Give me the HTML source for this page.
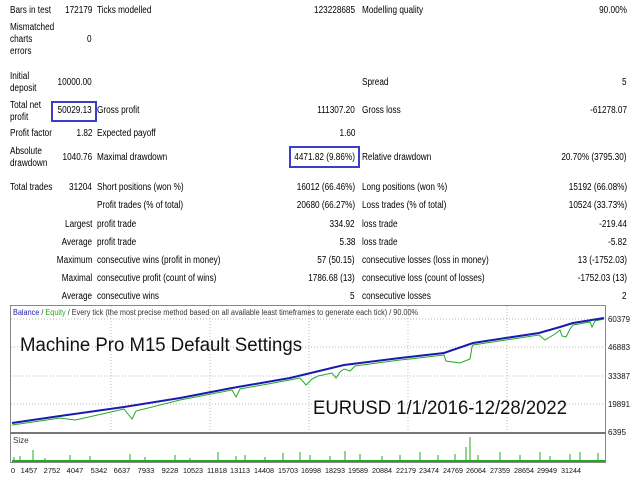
<!DOCTYPE html>
<html><head><meta charset="utf-8"><style>
*{margin:0;padding:0}
body{width:640px;height:480px;background:#fff;position:relative;overflow:hidden;font-family:"Liberation Sans",sans-serif;font-size:10px;color:#000}
.t{position:absolute;white-space:nowrap;line-height:12px;transform:scaleX(.82);transform-origin:left top}
.r{text-align:right;transform-origin:right top}
.box{position:absolute;border:2px solid #3b3fc8}
</style></head><body>
<div class="t" style="left:10px;top:5px">Bars in test</div>
<div class="t r" style="right:548px;top:5px">172179</div>
<div class="t" style="left:97px;top:5px">Ticks modelled</div>
<div class="t r" style="right:285px;top:5px">123228685</div>
<div class="t" style="left:362px;top:5px">Modelling quality</div>
<div class="t r" style="right:13px;top:5px">90.00%</div>

<div class="t" style="left:10px;top:22px">Mismatched<br>charts<br>errors</div>
<div class="t r" style="right:548px;top:34px">0</div>

<div class="t" style="left:10px;top:71px">Initial<br>deposit</div>
<div class="t r" style="right:548px;top:77px">10000.00</div>
<div class="t" style="left:362px;top:77px">Spread</div>
<div class="t r" style="right:13px;top:77px">5</div>

<div class="t" style="left:10px;top:100px">Total net<br>profit</div>
<div class="box" style="left:51px;top:101px;width:42px;height:17px"></div>
<div class="t r" style="right:548px;top:105px">50029.13</div>
<div class="t" style="left:97px;top:105px">Gross profit</div>
<div class="t r" style="right:285px;top:105px">111307.20</div>
<div class="t" style="left:362px;top:105px">Gross loss</div>
<div class="t r" style="right:13px;top:105px">-61278.07</div>

<div class="t" style="left:10px;top:128px">Profit factor</div>
<div class="t r" style="right:548px;top:128px">1.82</div>
<div class="t" style="left:97px;top:128px">Expected payoff</div>
<div class="t r" style="right:285px;top:128px">1.60</div>

<div class="t" style="left:10px;top:146px">Absolute<br>drawdown</div>
<div class="t r" style="right:548px;top:152px">1040.76</div>
<div class="t" style="left:97px;top:152px">Maximal drawdown</div>
<div class="box" style="left:289px;top:146px;width:67px;height:18px"></div>
<div class="t r" style="right:285px;top:152px">4471.82 (9.86%)</div>
<div class="t" style="left:362px;top:152px">Relative drawdown</div>
<div class="t r" style="right:13px;top:152px">20.70% (3795.30)</div>

<div class="t" style="left:10px;top:182px">Total trades</div>
<div class="t r" style="right:548px;top:182px">31204</div>
<div class="t" style="left:97px;top:182px">Short positions (won %)</div>
<div class="t r" style="right:285px;top:182px">16012 (66.46%)</div>
<div class="t" style="left:362px;top:182px">Long positions (won %)</div>
<div class="t r" style="right:13px;top:182px">15192 (66.08%)</div>

<div class="t" style="left:97px;top:200px">Profit trades (% of total)</div>
<div class="t r" style="right:285px;top:200px">20680 (66.27%)</div>
<div class="t" style="left:362px;top:200px">Loss trades (% of total)</div>
<div class="t r" style="right:13px;top:200px">10524 (33.73%)</div>

<div class="t r" style="right:548px;top:219px">Largest</div>
<div class="t" style="left:97px;top:219px">profit trade</div>
<div class="t r" style="right:285px;top:219px">334.92</div>
<div class="t" style="left:362px;top:219px">loss trade</div>
<div class="t r" style="right:13px;top:219px">-219.44</div>

<div class="t r" style="right:548px;top:237px">Average</div>
<div class="t" style="left:97px;top:237px">profit trade</div>
<div class="t r" style="right:285px;top:237px">5.38</div>
<div class="t" style="left:362px;top:237px">loss trade</div>
<div class="t r" style="right:13px;top:237px">-5.82</div>

<div class="t r" style="right:548px;top:255px">Maximum</div>
<div class="t" style="left:97px;top:255px">consecutive wins (profit in money)</div>
<div class="t r" style="right:285px;top:255px">57 (50.15)</div>
<div class="t" style="left:362px;top:255px">consecutive losses (loss in money)</div>
<div class="t r" style="right:13px;top:255px">13 (-1752.03)</div>

<div class="t r" style="right:548px;top:273px">Maximal</div>
<div class="t" style="left:97px;top:273px">consecutive profit (count of wins)</div>
<div class="t r" style="right:285px;top:273px">1786.68 (13)</div>
<div class="t" style="left:362px;top:273px">consecutive loss (count of losses)</div>
<div class="t r" style="right:13px;top:273px">-1752.03 (13)</div>

<div class="t r" style="right:548px;top:291px">Average</div>
<div class="t" style="left:97px;top:291px">consecutive wins</div>
<div class="t r" style="right:285px;top:291px">5</div>
<div class="t" style="left:362px;top:291px">consecutive losses</div>
<div class="t r" style="right:13px;top:291px">2</div>

<svg style="position:absolute;left:0;top:0" width="640" height="480">
<rect x="10.5" y="305.5" width="595" height="157" fill="#fff" stroke="#888"/>
<g stroke="#bbb" stroke-dasharray="1,2">
<line x1="11" x2="605" y1="319" y2="319"/><line x1="11" x2="605" y1="347" y2="347"/><line x1="11" x2="605" y1="376" y2="376"/><line x1="11" x2="605" y1="404" y2="404"/>
<line x1="111" x2="111" y1="306" y2="432"/><line x1="210" x2="210" y1="306" y2="432"/><line x1="309" x2="309" y1="306" y2="432"/><line x1="408" x2="408" y1="306" y2="432"/><line x1="507" x2="507" y1="306" y2="432"/>
</g>
<line x1="10" x2="606" y1="433" y2="433" stroke="#777" stroke-width="2"/>
<polyline fill="none" stroke="#22aa22" stroke-width="1" points="12,425 40,421 60,418 75,420 80,419 124,409 128,414 132,419 136,411 180,400 232,390 236,397 240,389 290,380 300,378 306,385 312,379 318,376 332,373 336,378 340,372 344,369 350,371 355,366 400,360 410,359 444,355 446,361 460,363 470,359 472,347 473,345 539,335 545,340 555,334 560,330 562,336 566,337 570,329 573,325 590,322 592,327 595,321 604,319"/>
<polyline fill="none" stroke="#1a1ab0" stroke-width="2" points="12,423 60,416 124,407 180,398 232,388 290,378 344,365 400,358 444,353 473,343 539,333 560,327 573,323 604,318"/>
<text x="13" y="315" font-size="8" fill="#1a1ab0" font-family="Liberation Sans,sans-serif" textLength="405" lengthAdjust="spacingAndGlyphs">Balance <tspan fill="#333">/</tspan> <tspan fill="#2a2">Equity</tspan> <tspan fill="#333">/ Every tick (the most precise method based on all available least timeframes to generate each tick) / 90.00%</tspan></text>
<text x="20" y="351" font-size="19" fill="#111" font-family="Liberation Sans,sans-serif" textLength="282" lengthAdjust="spacingAndGlyphs">Machine Pro M15 Default Settings</text>
<text x="313" y="414" font-size="19" fill="#111" font-family="Liberation Sans,sans-serif" textLength="254" lengthAdjust="spacingAndGlyphs">EURUSD 1/1/2016-12/28/2022</text>
<text x="13" y="443" font-size="8" fill="#333" font-family="Liberation Sans,sans-serif">Size</text>
<g stroke="#22aa22" stroke-width="1">
<path d="M14 462V457M20 462V456M33 462V450M45 462V458M70 462V455M90 462V456M130 462V454M145 462V457M175 462V455M190 462V458M218 462V452M236 462V456M245 462V455M265 462V457M283 462V453M300 462V452M310 462V455M330 462V456M345 462V451M360 462V454M382 462V456M400 462V455M420 462V452M438 462V455M455 462V454M466 462V447M470 462V437M478 462V455M500 462V452M520 462V455M540 462V452M550 462V456M570 462V454M580 462V452M598 462V453"/>
<path d="M12 461H605" stroke-width="2"/>
</g>
<g font-size="8" fill="#111" font-family="Liberation Sans,sans-serif">
<text x="608" y="322" textLength="22" lengthAdjust="spacingAndGlyphs">60379</text><text x="608" y="350" textLength="22" lengthAdjust="spacingAndGlyphs">46883</text><text x="608" y="379" textLength="22" lengthAdjust="spacingAndGlyphs">33387</text><text x="608" y="407" textLength="22" lengthAdjust="spacingAndGlyphs">19891</text><text x="608" y="435" textLength="18" lengthAdjust="spacingAndGlyphs">6395</text>
</g>
<g font-size="7.5" fill="#111" font-family="Liberation Sans,sans-serif" text-anchor="middle" transform="translate(0,473)">
<text x="13">0</text><text x="29">1457</text><text x="52">2752</text><text x="75">4047</text><text x="99">5342</text><text x="122">6637</text><text x="146">7933</text><text x="170">9228</text><text x="193" textLength="20" lengthAdjust="spacingAndGlyphs">10523</text><text x="217" textLength="20" lengthAdjust="spacingAndGlyphs">11818</text><text x="240" textLength="20" lengthAdjust="spacingAndGlyphs">13113</text><text x="264" textLength="20" lengthAdjust="spacingAndGlyphs">14408</text><text x="288" textLength="20" lengthAdjust="spacingAndGlyphs">15703</text><text x="311" textLength="20" lengthAdjust="spacingAndGlyphs">16998</text><text x="335" textLength="20" lengthAdjust="spacingAndGlyphs">18293</text><text x="358" textLength="20" lengthAdjust="spacingAndGlyphs">19589</text><text x="382" textLength="20" lengthAdjust="spacingAndGlyphs">20884</text><text x="406" textLength="20" lengthAdjust="spacingAndGlyphs">22179</text><text x="429" textLength="20" lengthAdjust="spacingAndGlyphs">23474</text><text x="453" textLength="20" lengthAdjust="spacingAndGlyphs">24769</text><text x="476" textLength="20" lengthAdjust="spacingAndGlyphs">26064</text><text x="500" textLength="20" lengthAdjust="spacingAndGlyphs">27359</text><text x="524" textLength="20" lengthAdjust="spacingAndGlyphs">28654</text><text x="547" textLength="20" lengthAdjust="spacingAndGlyphs">29949</text><text x="571" textLength="20" lengthAdjust="spacingAndGlyphs">31244</text>
</g>
</svg>
</body></html>
